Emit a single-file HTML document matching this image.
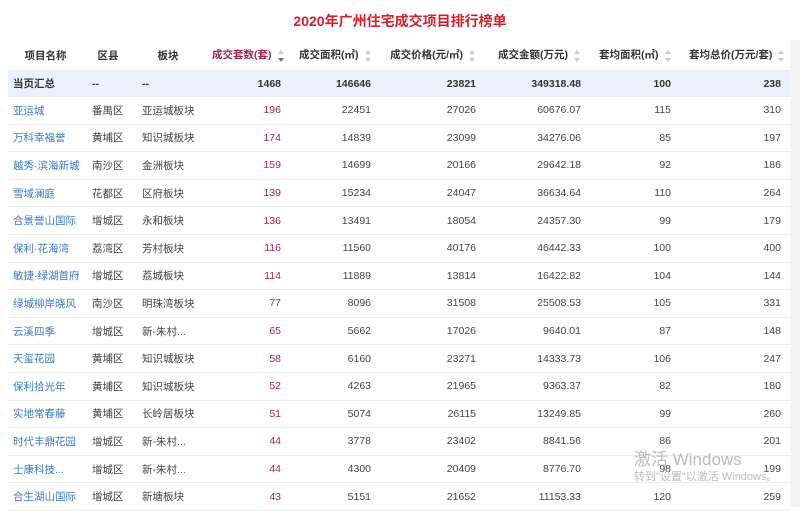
<!DOCTYPE html>
<html><head><meta charset="utf-8"><style>
body{margin:0;width:800px;height:507px;background:#fff;font-family:"Liberation Sans","Noto Sans CJK SC",sans-serif;overflow:hidden;position:relative}
.title{position:absolute;top:11px;left:0;width:800px;text-align:center;color:#d4202a;font-weight:bold;font-size:14px}
table{position:absolute;left:8px;top:40px;border-collapse:collapse;table-layout:fixed;width:782px;font-size:10.5px;color:#444}
td,th{padding:0 9px;white-space:nowrap;border-bottom:1px solid #ececec}
td:first-child{padding-left:5px;padding-right:0}
th{height:30px;font-weight:bold;color:#333;text-align:right;font-size:10.5px}
th.c{text-align:center}
tr.s td{background:#eaf1fb;height:25px;font-weight:bold;color:#333}
tr.r td{height:26.6px}
.n{text-align:right}
.a{color:#3b79c4}
.red{color:#a0284e}
.ar{display:inline-block;width:8px;margin-left:5px;vertical-align:middle;position:relative;height:14px}
.ar:before{content:"";position:absolute;left:1px;top:1px;border:3px solid transparent;border-bottom:4px solid #ccc;border-top:0}
.ar:after{content:"";position:absolute;left:1px;bottom:1px;border:3px solid transparent;border-top:4px solid #ccc;border-bottom:0}
.ar.d:after{border-top-color:#777}
.sb{position:absolute;left:790px;top:40px;width:10px;height:467px;background:#f3f3f3}
.wm{position:absolute;left:634px;top:445px;color:#bbb;font-size:17px}
.wm2{position:absolute;left:634px;top:468px;color:#bbb;font-size:11px}
</style></head><body>
<div class="title">2020年广州住宅成交项目排行榜单</div>
<div class="sb"></div>
<table>
<colgroup><col style="width:75px"><col style="width:50px"><col style="width:70px"><col style="width:87px"><col style="width:90px"><col style="width:105px"><col style="width:105px"><col style="width:90px"><col style="width:110px"></colgroup>
<tr><th class="c">项目名称</th><th class="c">区县</th><th class="c">板块</th><th><span class="red">成交套数(套)</span><span class="ar d"></span></th><th>成交面积(㎡)<span class="ar"></span></th><th>成交价格(元/㎡)<span class="ar"></span></th><th>成交金额(万元)<span class="ar"></span></th><th>套均面积(㎡)<span class="ar"></span></th><th>套均总价(万元/套)<span class="ar"></span></th></tr>
<tr class="s"><td>当页汇总</td><td>--</td><td>--</td><td class="n red">1468</td><td class="n">146646</td><td class="n">23821</td><td class="n">349318.48</td><td class="n">100</td><td class="n">238</td></tr>
<tr class="r"><td class="a">亚运城</td><td>番禺区</td><td>亚运城板块</td><td class="n red">196</td><td class="n">22451</td><td class="n">27026</td><td class="n">60676.07</td><td class="n">115</td><td class="n">310</td></tr>
<tr class="r"><td class="a">万科幸福誉</td><td>黄埔区</td><td>知识城板块</td><td class="n red">174</td><td class="n">14839</td><td class="n">23099</td><td class="n">34276.06</td><td class="n">85</td><td class="n">197</td></tr>
<tr class="r"><td class="a">越秀·滨海新城</td><td>南沙区</td><td>金洲板块</td><td class="n red">159</td><td class="n">14699</td><td class="n">20166</td><td class="n">29642.18</td><td class="n">92</td><td class="n">186</td></tr>
<tr class="r"><td class="a">雪域澜庭</td><td>花都区</td><td>区府板块</td><td class="n red">139</td><td class="n">15234</td><td class="n">24047</td><td class="n">36634.64</td><td class="n">110</td><td class="n">264</td></tr>
<tr class="r"><td class="a">合景誉山国际</td><td>增城区</td><td>永和板块</td><td class="n red">136</td><td class="n">13491</td><td class="n">18054</td><td class="n">24357.30</td><td class="n">99</td><td class="n">179</td></tr>
<tr class="r"><td class="a">保利·花海湾</td><td>荔湾区</td><td>芳村板块</td><td class="n red">116</td><td class="n">11560</td><td class="n">40176</td><td class="n">46442.33</td><td class="n">100</td><td class="n">400</td></tr>
<tr class="r"><td class="a">敏捷·绿湖首府</td><td>增城区</td><td>荔城板块</td><td class="n red">114</td><td class="n">11889</td><td class="n">13814</td><td class="n">16422.82</td><td class="n">104</td><td class="n">144</td></tr>
<tr class="r"><td class="a">绿城柳岸晓风</td><td>南沙区</td><td>明珠湾板块</td><td class="n red">77</td><td class="n">8096</td><td class="n">31508</td><td class="n">25508.53</td><td class="n">105</td><td class="n">331</td></tr>
<tr class="r"><td class="a">云溪四季</td><td>增城区</td><td>新-朱村...</td><td class="n red">65</td><td class="n">5662</td><td class="n">17026</td><td class="n">9640.01</td><td class="n">87</td><td class="n">148</td></tr>
<tr class="r"><td class="a">天玺花园</td><td>黄埔区</td><td>知识城板块</td><td class="n red">58</td><td class="n">6160</td><td class="n">23271</td><td class="n">14333.73</td><td class="n">106</td><td class="n">247</td></tr>
<tr class="r"><td class="a">保利拾光年</td><td>黄埔区</td><td>知识城板块</td><td class="n red">52</td><td class="n">4263</td><td class="n">21965</td><td class="n">9363.37</td><td class="n">82</td><td class="n">180</td></tr>
<tr class="r"><td class="a">实地常春藤</td><td>黄埔区</td><td>长岭居板块</td><td class="n red">51</td><td class="n">5074</td><td class="n">26115</td><td class="n">13249.85</td><td class="n">99</td><td class="n">260</td></tr>
<tr class="r"><td class="a">时代丰鼎花园</td><td>增城区</td><td>新-朱村...</td><td class="n red">44</td><td class="n">3778</td><td class="n">23402</td><td class="n">8841.56</td><td class="n">86</td><td class="n">201</td></tr>
<tr class="r"><td class="a">士康科技...</td><td>增城区</td><td>新-朱村...</td><td class="n red">44</td><td class="n">4300</td><td class="n">20409</td><td class="n">8776.70</td><td class="n">98</td><td class="n">199</td></tr>
<tr class="r"><td class="a">合生湖山国际</td><td>增城区</td><td>新塘板块</td><td class="n red">43</td><td class="n">5151</td><td class="n">21652</td><td class="n">11153.33</td><td class="n">120</td><td class="n">259</td></tr>
</table>
<div class="wm">激活 Windows</div>
<div class="wm2">转到"设置"以激活 Windows。</div>
</body></html>
